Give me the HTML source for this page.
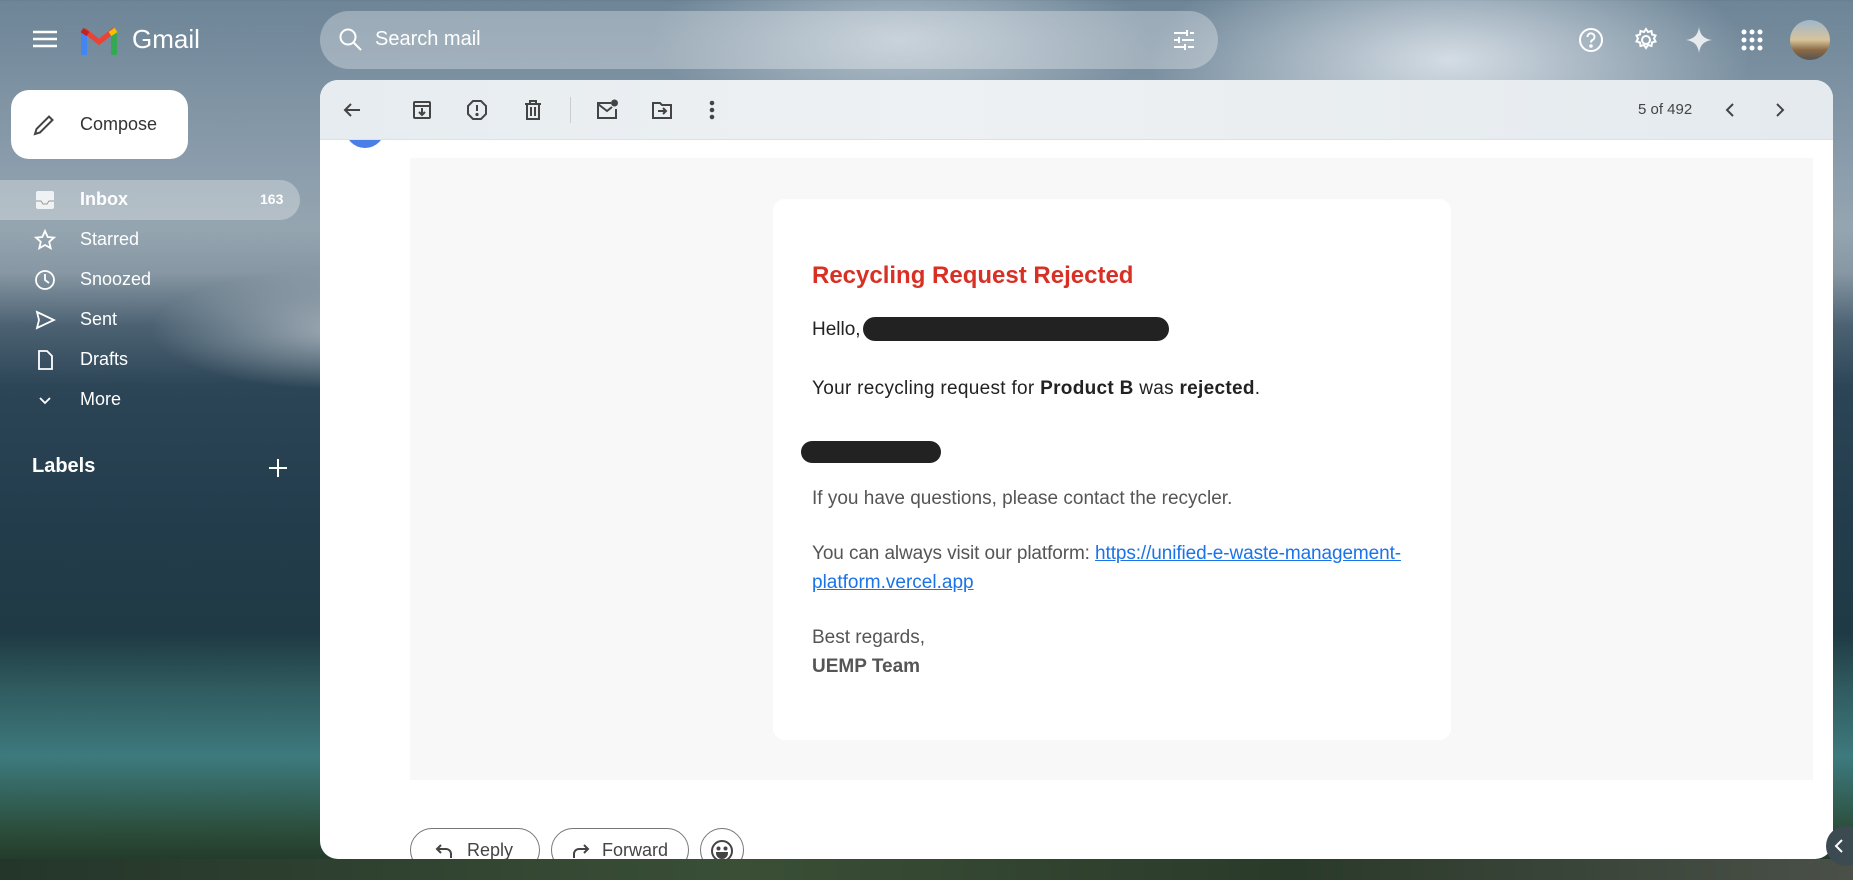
<!DOCTYPE html>
<html><head><meta charset="utf-8"><style>
*{box-sizing:border-box;margin:0;padding:0}
body{width:1853px;height:880px;overflow:hidden;position:relative;font-family:"Liberation Sans",Arial,sans-serif;
background:
radial-gradient(ellipse 300px 120px at 1450px 60px,rgba(235,240,245,.8),transparent),
radial-gradient(ellipse 250px 90px at 900px 40px,rgba(220,228,235,.6),transparent),
radial-gradient(ellipse 200px 60px at 350px 330px,rgba(220,225,230,.6),transparent),
linear-gradient(180deg,#6d8597 0%,#8a9cab 18%,#95a5b0 26%,#8797a3 31%,#4c6273 37%,#2c4556 44%,#233c4c 60%,#1f3a44 72%,#2f5a5e 78%,#3d7a7e 86%,#2a4a36 95%,#1f2e22 100%);}
.abs{position:absolute}
.ic{position:absolute;fill:none;stroke:#fff;stroke-width:2}
.nav{position:absolute;left:80px;color:#fff;font-size:18px}
.navi{position:absolute;left:34px;width:22px;height:22px}
.tb svg{position:absolute;top:99px;width:22px;height:22px;fill:none;stroke:#444;stroke-width:2}
p{position:absolute;left:812px;font-size:19px;color:#222;white-space:nowrap}
a{color:#1a73e8;text-decoration:underline}
.btn{position:absolute;top:828px;height:44px;border:1px solid #747775;border-radius:22px;background:#fff;font-size:18px;color:#444;}
</style></head><body>

<!-- top bar -->
<svg class="abs" style="left:33px;top:29px" width="24" height="20"><g stroke="#fff" stroke-width="2.4"><line x1="0" y1="3" x2="24" y2="3"/><line x1="0" y1="10" x2="24" y2="10"/><line x1="0" y1="17" x2="24" y2="17"/></g></svg>
<svg class="abs" style="left:80px;top:26px" width="38" height="29" viewBox="0 0 38 29">
<path d="M4 4l15 12L34 4" fill="none" stroke="#ea4335" stroke-width="5"/>
<path d="M4 29V6" stroke="#4285f4" stroke-width="6"/><path d="M34 29V6" stroke="#34a853" stroke-width="6"/>
<path d="M2 4l6 4" stroke="#c5221f" stroke-width="5"/><path d="M36 4l-6 4" stroke="#fbbc04" stroke-width="5"/></svg>
<div class="abs" style="left:132px;top:24px;color:#fff;font-size:26px">Gmail</div>

<div class="abs" style="left:320px;top:11px;width:898px;height:58px;border-radius:29px;background:rgba(255,255,255,.3)"></div>
<svg class="ic" style="left:338px;top:27px" width="26" height="26"><circle cx="10" cy="10" r="7.5"/><line x1="15.5" y1="15.5" x2="23" y2="23"/></svg>
<div class="abs" style="left:375px;top:28px;color:#fff;font-size:20px">Search mail</div>
<svg class="ic" style="left:1172px;top:28px" width="24" height="24"><path d="M2 5h12M18 5h4M2 12h4M10 12h12M2 19h10M16 19h6M15 2v6M7 9v6M13 16v6"/></svg>

<svg class="ic" style="left:1577px;top:26px" width="28" height="28"><circle cx="14" cy="14" r="11"/><path d="M10.5 11a3.5 3.5 0 1 1 5 3c-1.2.7-1.5 1.3-1.5 2.5" /><circle cx="14" cy="20" r=".8" fill="#fff"/></svg>
<svg class="ic" style="left:1632px;top:26px" width="28" height="28"><circle cx="14" cy="14" r="4"/><path d="M14 3l2 3 3.5-1 .5 3.5 3.5 1-1.5 3 1.5 3-3.5 1-.5 3.5-3.5-1-2 3-2-3-3.5 1-.5-3.5-3.5-1 1.5-3-1.5-3 3.5-1 .5-3.5 3.5 1z"/></svg>
<svg class="abs" style="left:1686px;top:27px" width="26" height="26"><path d="M13 0C14 8 18 12 26 13C18 14 14 18 13 26C12 18 8 14 0 13C8 12 12 8 13 0z" fill="rgba(255,255,255,.8)"/></svg>
<svg class="abs" style="left:1741px;top:29px" width="22" height="22" fill="#fff"><circle cx="3" cy="3" r="2.5"/><circle cx="11" cy="3" r="2.5"/><circle cx="19" cy="3" r="2.5"/><circle cx="3" cy="11" r="2.5"/><circle cx="11" cy="11" r="2.5"/><circle cx="19" cy="11" r="2.5"/><circle cx="3" cy="19" r="2.5"/><circle cx="11" cy="19" r="2.5"/><circle cx="19" cy="19" r="2.5"/></svg>
<div class="abs" style="left:1790px;top:20px;width:40px;height:40px;border-radius:50%;background:linear-gradient(180deg,#9fb6cc 0%,#d8c39a 50%,#8a6a45 75%,#555 100%)"></div>

<!-- sidebar -->
<div class="abs" style="left:11px;top:90px;width:177px;height:69px;border-radius:18px;background:#fff"></div>
<svg class="abs" style="left:32px;top:113px" width="24" height="24" fill="none" stroke="#444" stroke-width="2"><path d="M3 21l1.5-5L17 3.5l3.5 3.5L8 19.5z"/></svg>
<div class="abs" style="left:80px;top:114px;font-size:18px;color:#333">Compose</div>

<div class="abs" style="left:0;top:180px;width:300px;height:40px;border-radius:0 20px 20px 0;background:rgba(255,255,255,.3)"></div>
<svg class="navi" style="top:189px" viewBox="0 0 22 22"><rect x="2" y="2" width="18" height="18" rx="2" fill="rgba(255,255,255,.8)"/><path d="M2 12h5l2 3h4l2-3h5" stroke="#999" fill="none"/></svg>
<div class="nav" style="top:189px;font-weight:bold">Inbox</div>
<div class="abs" style="left:260px;top:191px;color:#fff;font-size:14px;font-weight:bold">163</div>
<svg class="navi" style="top:229px" viewBox="0 0 22 22"><path d="M11 2l2.7 6 6.3.6-4.8 4.2 1.5 6.4L11 16l-5.7 3.2 1.5-6.4L2 8.6 8.3 8z" fill="none" stroke="#fff" stroke-width="1.8"/></svg>
<div class="nav" style="top:229px">Starred</div>
<svg class="navi" style="top:269px" viewBox="0 0 22 22"><circle cx="11" cy="11" r="9" fill="none" stroke="#fff" stroke-width="1.8"/><path d="M11 5v6l4 3" fill="none" stroke="#fff" stroke-width="1.8"/></svg>
<div class="nav" style="top:269px">Snoozed</div>
<svg class="navi" style="top:309px" viewBox="0 0 22 22"><path d="M3 3l17 8-17 8 2-8z" fill="none" stroke="#fff" stroke-width="1.8"/></svg>
<div class="nav" style="top:309px">Sent</div>
<svg class="navi" style="top:349px" viewBox="0 0 22 22"><path d="M5 2h8l5 5v13H5z" fill="none" stroke="#fff" stroke-width="1.8"/></svg>
<div class="nav" style="top:349px">Drafts</div>
<svg class="navi" style="top:389px" viewBox="0 0 22 22"><path d="M6 9l5 5 5-5" fill="none" stroke="#fff" stroke-width="1.8"/></svg>
<div class="nav" style="top:389px">More</div>
<div class="abs" style="left:32px;top:455px;color:#fff;font-size:20px;font-weight:bold">Labels</div>
<svg class="ic" style="left:268px;top:458px" width="20" height="20"><path d="M10 1v18M1 10h18"/></svg>

<!-- main panel -->
<div class="abs" style="left:320px;top:80px;width:1513px;height:779px;border-radius:18px;background:#fff;overflow:hidden">
  <div class="abs" style="left:25px;top:28px;width:40px;height:40px;border-radius:50%;background:#4a7fe8"></div>
  <div class="abs" style="left:0;top:0;width:1513px;height:60px;background:linear-gradient(90deg,#e6ecf0,#eef1f3 40%,#e4eaee);border-bottom:1px solid #e0e0e0"></div>
  <div class="abs" style="left:90px;top:78px;width:1403px;height:622px;background:#f8f8f8"></div>
  <div class="abs" style="left:453px;top:119px;width:678px;height:541px;background:#fff;border-radius:12px"></div>
</div>

<div class="tb">
<svg style="left:341px" viewBox="0 0 22 22"><path d="M19 11H4M10 5l-6 6 6 6"/></svg>
<svg style="left:411px" viewBox="0 0 22 22"><rect x="3" y="3" width="16" height="16" rx="1"/><path d="M3 7h16M11 9v7M8 13l3 3 3-3"/></svg>
<svg style="left:466px" viewBox="0 0 22 22"><path d="M7 2h8l5 5v8l-5 5H7l-5-5V7z"/><path d="M11 6v6"/><circle cx="11" cy="15.5" r=".6" fill="#444"/></svg>
<svg style="left:522px" viewBox="0 0 22 22"><path d="M3 5h16M8 5V2h6v3M5 5v15h12V5M9 8v9M13 8v9"/></svg>
<svg style="left:596px" viewBox="0 0 22 22"><path d="M15 4H2v15h18V10"/><path d="M2 5l9 7 5-4"/><circle cx="18.5" cy="4" r="2.5" fill="#444"/></svg>
<svg style="left:651px" viewBox="0 0 22 22"><path d="M2 4h7l2 2h9v13H2z"/><path d="M7 12h8M12 9l3 3-3 3"/></svg>
<svg style="left:701px" viewBox="0 0 22 22"><circle cx="11" cy="4" r="1.3" fill="#444"/><circle cx="11" cy="11" r="1.3" fill="#444"/><circle cx="11" cy="18" r="1.3" fill="#444"/></svg>
<svg style="left:1719px" viewBox="0 0 22 22"><path d="M14 5l-6 6 6 6"/></svg>
<svg style="left:1769px" viewBox="0 0 22 22"><path d="M8 5l6 6-6 6"/></svg>
</div>
<div class="abs" style="left:570px;top:97px;width:1px;height:26px;background:#ccc"></div>
<div class="abs" style="left:1638px;top:101px;font-size:15px;color:#444">5 of 492</div>

<!-- email -->
<p style="top:262px;font-size:24px;font-weight:bold;color:#d93025">Recycling Request Rejected</p>
<p style="top:319px">Hello,</p>
<div class="abs" style="left:863px;top:317px;width:306px;height:24px;border-radius:12px;background:#222"></div>
<p style="top:378px;letter-spacing:.3px">Your recycling request for <b>Product B</b> was <b>rejected</b>.</p>
<div class="abs" style="left:801px;top:441px;width:140px;height:22px;border-radius:11px;background:#222"></div>
<p style="top:488px;color:#555">If you have questions, please contact the recycler.</p>
<p style="top:543px;color:#555;letter-spacing:-.1px">You can always visit our platform: <a>https://unified-e-waste-management-</a></p>
<p style="top:572px"><a>platform.vercel.app</a></p>
<p style="top:627px;color:#555">Best regards,</p>
<p style="top:656px;color:#555;font-weight:bold">UEMP Team</p>

<!-- reply bar -->
<div class="btn" style="left:410px;width:130px"><svg class="abs" style="left:24px;top:14px" width="18" height="16" fill="none" stroke="#444" stroke-width="2"><path d="M6 2L2 6l4 4M2 6h9a5 5 0 0 1 5 5v4"/></svg><span class="abs" style="left:56px;top:11px">Reply</span></div>
<div class="btn" style="left:551px;width:138px"><svg class="abs" style="left:20px;top:14px" width="18" height="16" fill="none" stroke="#444" stroke-width="2"><path d="M12 2l4 4-4 4M16 6H7a5 5 0 0 0-5 5v4"/></svg><span class="abs" style="left:50px;top:11px">Forward</span></div>
<div class="btn" style="left:700px;width:44px"><svg class="abs" style="left:9px;top:10px" width="24" height="24" fill="none" stroke="#444" stroke-width="2"><circle cx="12" cy="12" r="10"/><circle cx="8.5" cy="9.5" r="1" fill="#444"/><circle cx="15.5" cy="9.5" r="1" fill="#444"/><path d="M7 14h10a5 5 0 0 1-10 0z" fill="#444"/></svg></div>
<div class="abs" style="left:0;top:859px;width:1853px;height:21px;background:linear-gradient(90deg,#24352a,#3a4f36 40%,#2a3a2a 70%,#4a5048)"></div>
<div class="abs" style="left:1826px;top:826px;width:40px;height:40px;border-radius:50%;background:#3c4a52"></div>
<svg class="ic" style="left:1832px;top:838px" width="14" height="16"><path d="M10 2L4 8l6 6"/></svg>
</body></html>
